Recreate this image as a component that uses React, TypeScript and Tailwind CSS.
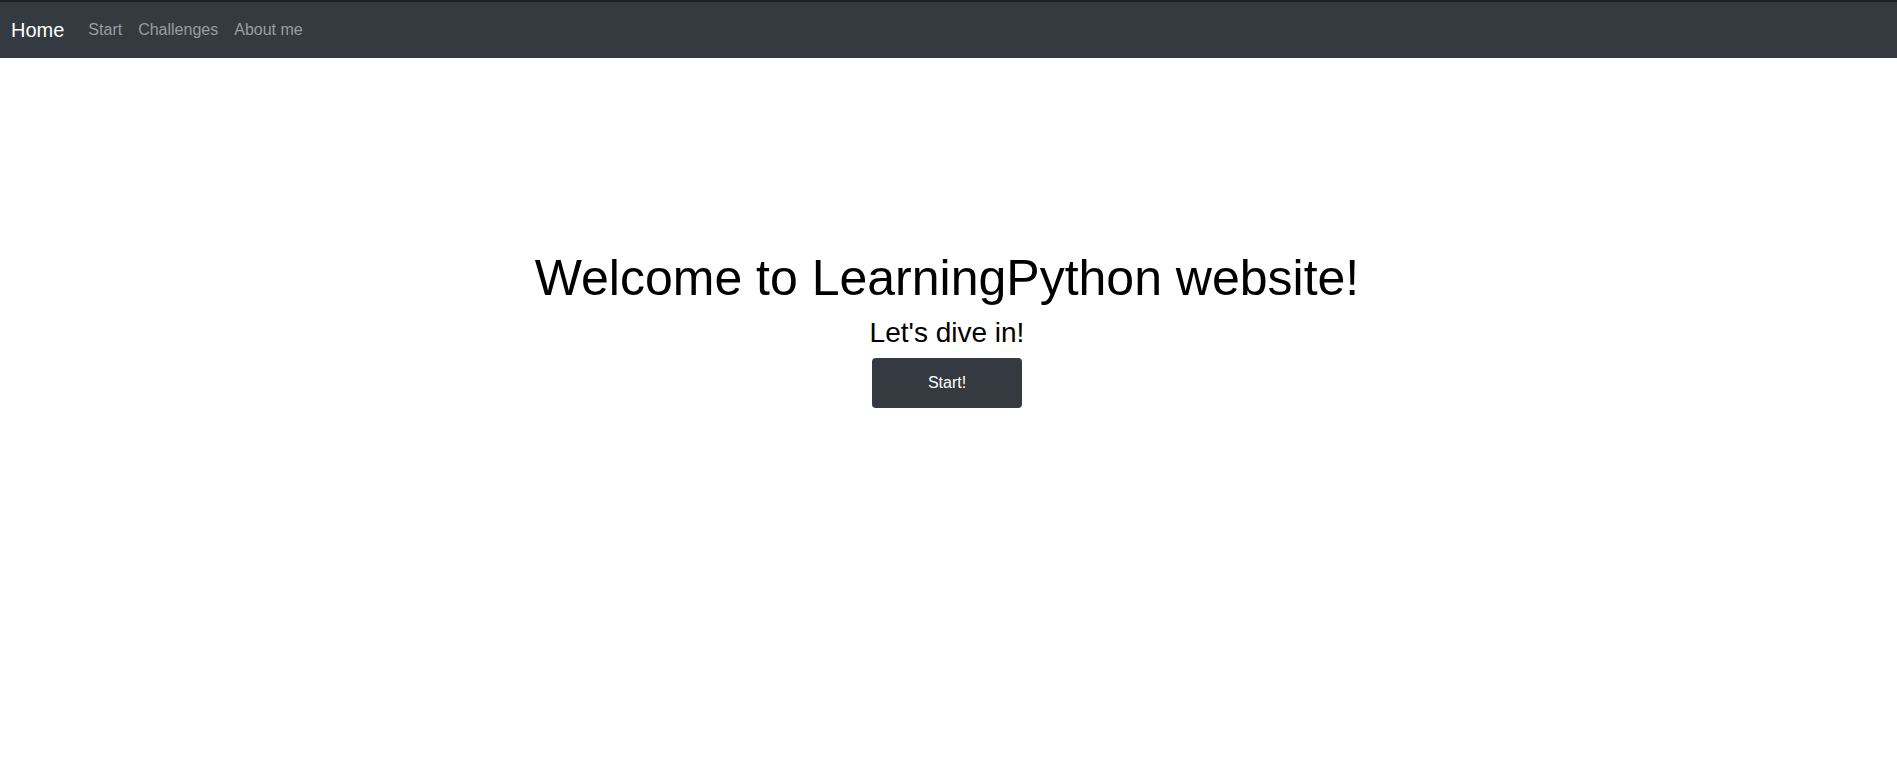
import React from "react";

export default function App() {
  return (
    <div className="min-h-screen bg-white" style={{ fontFamily: '"Liberation Sans", Arial, sans-serif' }}>
      <nav className="h-[58px] border-t-2 border-[#1f1f1f] bg-[#343a40] flex items-center pl-[11px]">
        <a className="text-[20px] leading-[30px] text-white mr-[16px]">Home</a>
        <div className="flex items-center">
          <a className="text-[16px] leading-[24px] text-[#9a9da0] px-2">Start</a>
          <a className="text-[16px] leading-[24px] text-[#9a9da0] px-2">Challenges</a>
          <a className="text-[16px] leading-[24px] text-[#9a9da0] px-2">About me</a>
        </div>
      </nav>
      <main className="flex flex-col items-center pt-[190px] pr-[3px]">
        <h1 className="text-[50px] leading-[1.2] text-black mb-2">Welcome to LearningPython website!</h1>
        <h2 className="text-[28px] leading-[1.2] text-black mb-2">Let's dive in!</h2>
        <button className="w-[150px] h-[50px] rounded bg-[#343a40] text-white text-[16px]">Start!</button>
      </main>
    </div>
  );
}
